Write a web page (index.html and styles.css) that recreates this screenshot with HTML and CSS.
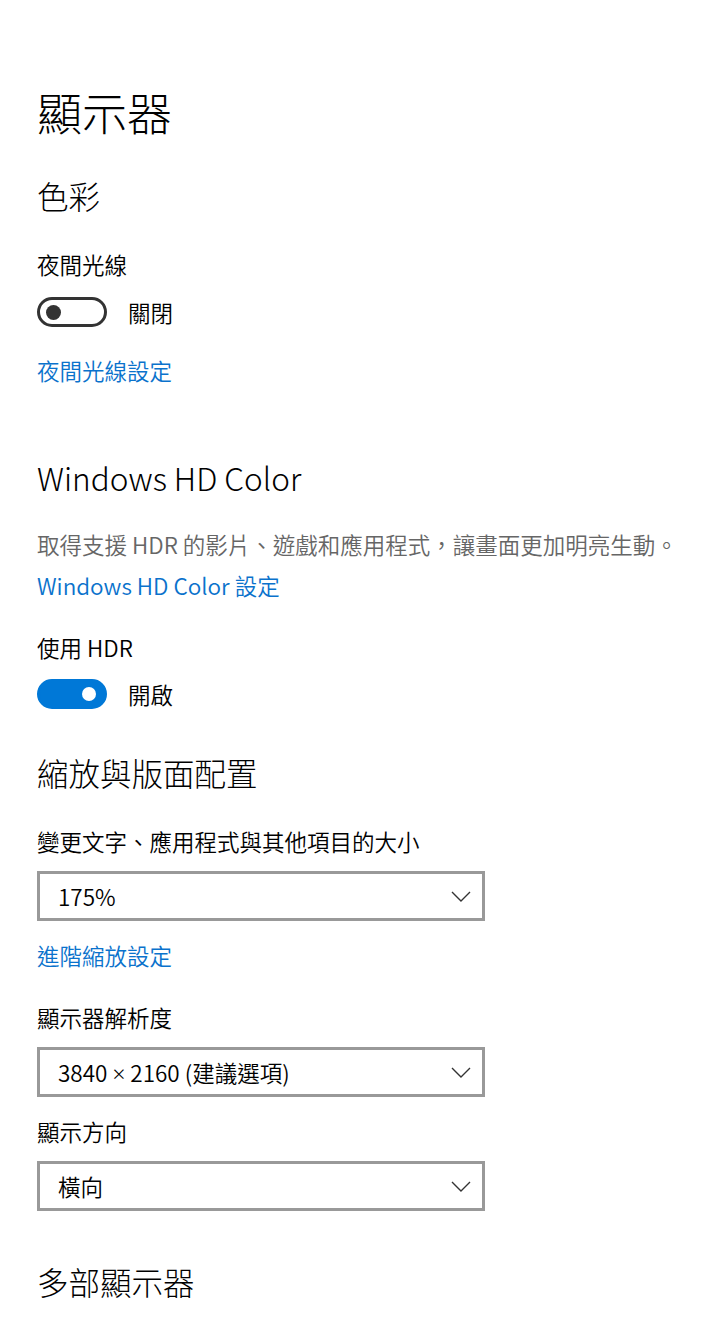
FILE: index.html
```html
<!DOCTYPE html>
<html lang="zh-Hant">
<head>
    <meta charset="UTF-8">
    <meta name="viewport" content="width=device-width, initial-scale=1.0">
    <title>顯示器</title>
    <link rel="stylesheet" href="styles.css">
</head>
<body>
    <!-- 頁面標題 -->
    <h1 class="page-title">顯示器</h1>

    <!-- 色彩 -->
    <h2 class="section-title first">色彩</h2>
    <div class="label">夜間光線</div>
    <div class="toggle-row">
        <span class="toggle"><span class="knob"></span></span>
        <span class="toggle-text">關閉</span>
    </div>
    <a class="link link-after-toggle" href="#">夜間光線設定</a>

    <!-- Windows HD Color -->
    <h2 class="section-title hd">Windows HD Color</h2>
    <p class="desc">取得支援 HDR 的影片、遊戲和應用程式，讓畫面更加明亮生動。</p>
    <a class="link link-after-desc" href="#">Windows HD Color 設定</a>
    <div class="label">使用 HDR</div>
    <div class="toggle-row second">
        <span class="toggle on"><span class="knob"></span></span>
        <span class="toggle-text">開啟</span>
    </div>

    <!-- 縮放與版面配置 -->
    <h2 class="section-title scale">縮放與版面配置</h2>
    <div class="label">變更文字、應用程式與其他項目的大小</div>
    <div class="dropdown">
        <span>175%</span>
        <svg class="chevron" width="20" height="11" viewBox="0 0 20 11"><polyline points="1,1 10,10 19,1" fill="none" stroke="#333" stroke-width="1.4"/></svg>
    </div>
    <a class="link link-after-dropdown" href="#">進階縮放設定</a>
    <div class="label">顯示器解析度</div>
    <div class="dropdown">
        <span>3840 <span class="times">×</span> 2160 (建議選項)</span>
        <svg class="chevron" width="20" height="11" viewBox="0 0 20 11"><polyline points="1,1 10,10 19,1" fill="none" stroke="#333" stroke-width="1.4"/></svg>
    </div>
    <div class="label label-after-dropdown">顯示方向</div>
    <div class="dropdown">
        <span>橫向</span>
        <svg class="chevron" width="20" height="11" viewBox="0 0 20 11"><polyline points="1,1 10,10 19,1" fill="none" stroke="#333" stroke-width="1.4"/></svg>
    </div>

    <!-- 多部顯示器 -->
    <h2 class="section-title multi">多部顯示器</h2>
</body>
</html>
```

FILE: styles.css
```css
/* 頁面 */
body {
    margin: 0;
    padding: 82px 0 0 37px;
    background: #fff;
    color: #000;
    font-family: "Noto Sans CJK TC", "Noto Sans", sans-serif;
    font-size: 22.5px;
    font-weight: 350;
}

/* 標題 */
.page-title {
    margin: 0;
    font-size: 45px;
    font-weight: 300;
    line-height: 60px;
}

.section-title {
    margin: 0;
    font-size: 31.5px;
    font-weight: 300;
    line-height: 40px;
}

.section-title.first { margin-top: 33px; }
.section-title.hd { margin-top: 72px; }
.section-title.scale { margin-top: 43px; }
.section-title.multi { margin-top: 50px; }

/* 文字標籤 */
.label {
    margin-top: 34px;
    line-height: 30px;
}

.label-after-dropdown { margin-top: 19px; }

.desc {
    margin: 32px 0 0;
    line-height: 30px;
    color: #666;
}

/* 連結 */
.link {
    display: block;
    width: max-content;
    line-height: 30px;
    color: #0a72cc;
    text-decoration: none;
}

.link-after-toggle { margin-top: 28px; }
.link-after-desc { margin-top: 11px; }
.link-after-desc + .label { margin-top: 32px; }
.link-after-dropdown { margin-top: 19px; }
.link-after-dropdown + .label { margin-top: 32px; }

/* 開關 */
.toggle-row {
    display: flex;
    align-items: center;
    gap: 21px;
    margin-top: 18px;
    height: 30px;
}

.toggle-row.second { margin-top: 17px; }

.toggle {
    box-sizing: border-box;
    display: flex;
    align-items: center;
    width: 70px;
    height: 30px;
    border: 3px solid #333;
    border-radius: 15px;
    padding: 0 6px;
}

.toggle .knob {
    width: 15px;
    height: 15px;
    border-radius: 50%;
    background: #333;
}

.toggle.on {
    background: #0078d7;
    border-color: #0078d7;
    justify-content: flex-end;
    padding-right: 8px;
}

.toggle.on .knob {
    width: 14px;
    height: 14px;
    background: #fff;
}

/* 下拉選單 */
.dropdown {
    box-sizing: border-box;
    display: flex;
    align-items: center;
    justify-content: space-between;
    width: 448px;
    height: 50px;
    margin-top: 15px;
    padding: 0 11px 0 18px;
    border: 3px solid #999;
}

.times {
    font-family: "Noto Sans", sans-serif;
}
```
